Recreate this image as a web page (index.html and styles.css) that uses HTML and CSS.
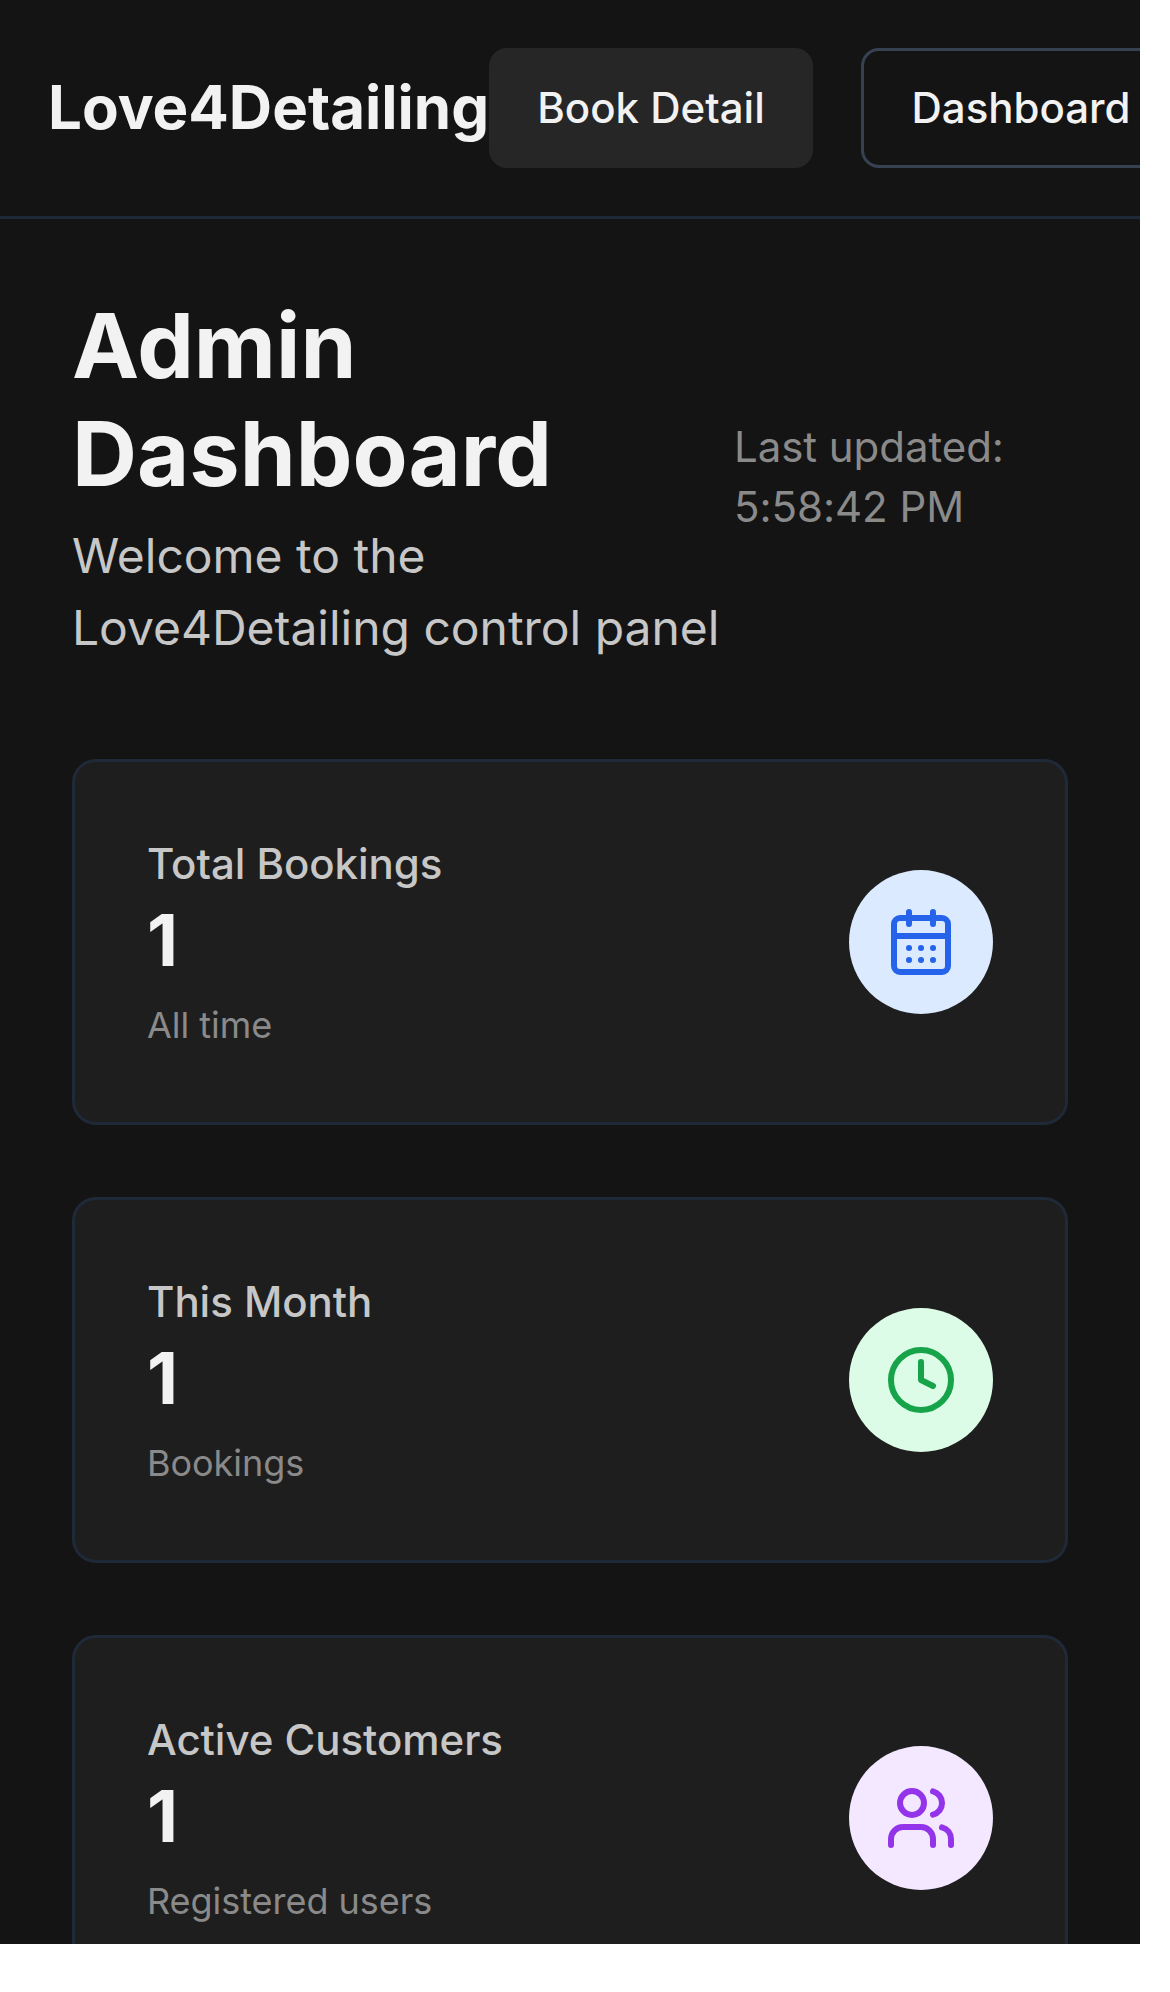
FILE: index.html
```html
<!DOCTYPE html>
<html lang="en">
<head>
<meta charset="utf-8">
<title>Love4Detailing</title>
<link rel="stylesheet" href="styles.css">
</head>
<body>
<div class="app">
  <header class="topbar">
    <div class="brand">Love4Detailing</div>
    <nav class="actions">
      <a class="btn btn-solid">Book Detail</a>
      <a class="btn btn-outline">Dashboard</a>
    </nav>
  </header>
  <main class="content">
    <section class="intro">
      <div class="intro-text">
        <h1>Admin Dashboard</h1>
        <p>Welcome to the Love4Detailing control panel</p>
      </div>
      <div class="updated">Last updated: 5:58:42 PM</div>
    </section>
    <section class="stats">
      <article class="card">
        <div>
          <p class="label">Total Bookings</p>
          <p class="value">1</p>
          <p class="note">All time</p>
        </div>
        <div class="badge blue">
          <svg class="icon" viewBox="0 0 24 24"><path d="M8 2v4M16 2v4M3 10h18"/><rect x="3" y="4" width="18" height="18" rx="2"/><path d="M8 14h.01M12 14h.01M16 14h.01M8 18h.01M12 18h.01M16 18h.01"/></svg>
        </div>
      </article>
      <article class="card">
        <div>
          <p class="label">This Month</p>
          <p class="value">1</p>
          <p class="note">Bookings</p>
        </div>
        <div class="badge green">
          <svg class="icon" viewBox="0 0 24 24"><circle cx="12" cy="12" r="10"/><path d="M12 6v6l4 2"/></svg>
        </div>
      </article>
      <article class="card">
        <div>
          <p class="label">Active Customers</p>
          <p class="value">1</p>
          <p class="note">Registered users</p>
        </div>
        <div class="badge purple">
          <svg class="icon" viewBox="0 0 24 24"><path d="M16 21v-2a4 4 0 0 0-4-4H6a4 4 0 0 0-4 4v2"/><circle cx="9" cy="7" r="4"/><path d="M22 21v-2a4 4 0 0 0-3-3.87M16 3.13a4 4 0 0 1 0 7.75"/></svg>
        </div>
      </article>
    </section>
  </main>
</div>
</body>
</html>
```
FILE: styles.css
```css
* { box-sizing: border-box; margin: 0; }
body { background: #fff; font-family: Inter, sans-serif; color: #f2f2f2; }
.app { width: 1140px; height: 1944px; overflow: hidden; background: #141414; }
.topbar { display: flex; align-items: center; height: 219px; padding: 0 48px; border-bottom: 3px solid #1f2937; }
.brand { flex: none; width: 441px; padding-bottom: 2px; font-size: 60px; font-weight: 700; line-height: 84px; white-space: nowrap; }
.actions { display: flex; flex: none; gap: 48px; }
.btn { display: flex; align-items: center; justify-content: center; height: 120px; border-radius: 18px; font-size: 42px; font-weight: 500; line-height: 60px; white-space: nowrap; }
.btn-solid { width: 324px; background: #262626; }
.btn-outline { width: 320px; border: 3px solid #374151; }
.content { padding: 72px; }
.intro { display: flex; align-items: center; height: 372px; margin-bottom: 96px; }
.intro-text { flex: none; width: 662px; padding-top: 2px; }
h1 { width: 500px; margin-bottom: 12px; font-size: 90px; font-weight: 700; line-height: 108px; }
.intro-text p { color: #c7c7c7; font-size: 48px; line-height: 72px; letter-spacing: -0.02px; }
.updated { width: 334px; color: #8a8a8a; font-size: 42px; line-height: 60px; letter-spacing: -0.05px; }
.stats { display: grid; gap: 72px; }
.card { display: flex; align-items: center; justify-content: space-between; height: 366px; padding: 72px; border: 3px solid #1f2937; border-radius: 24px; background: #1e1e1e; }
.label { color: #c7c7c7; font-size: 42px; font-weight: 500; line-height: 60px; letter-spacing: -0.04px; }
.value { font-size: 72px; font-weight: 700; line-height: 92px; padding-bottom: 15px; }
.note { color: #8a8a8a; font-size: 36px; line-height: 48px; padding-bottom: 1px; letter-spacing: -0.04px; }
.badge { display: grid; place-items: center; width: 144px; height: 144px; border-radius: 50%; }
.blue { background: #dbeafe; color: #2563eb; }
.green { background: #dcfce7; color: #16a34a; }
.purple { background: #f3e8ff; color: #9333ea; }
.icon { width: 72px; height: 72px; fill: none; stroke: currentColor; stroke-width: 2; stroke-linecap: round; stroke-linejoin: round; }
```
